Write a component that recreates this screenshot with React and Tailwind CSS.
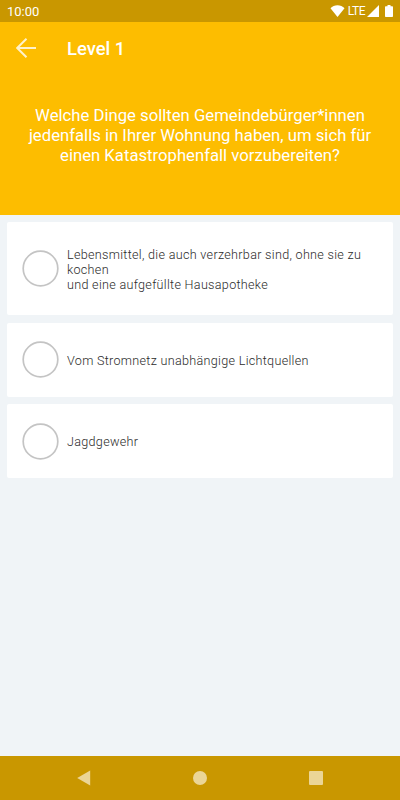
import { clsx } from "clsx";

const answers = [
	{
		label: "Lebensmittel, die auch verzehrbar sind, ohne sie zu kochen\nund eine aufgefüllte Hausapotheke",
		className: "h-[93px]",
	},
	{
		label: "Vom Stromnetz unabhängige Lichtquellen",
		className: "h-[74px]",
	},
	{
		label: "Jagdgewehr",
		className: "h-[74px]",
	},
];

function StatusBar() {
	return (
		<div className="h-[22px] flex-shrink-0 bg-[#c99700] text-white flex items-center justify-between pl-[7px] pr-[7px]">
			<span className="text-[13px]/[22px] pt-px">10:00</span>

			<div className="flex items-center">
				<svg className="w-[15px] h-[12px]" viewBox="0 0 14 12" fill="currentColor">
					<path d="M7 12 0 3.2C1.8 1.3 4.2.2 7 .2s5.2 1.1 7 3z" />
				</svg>
				<span className="ml-[3px] text-[12px]/[22px] tracking-[-0.5px]">
					LTE
				</span>
				<svg className="ml-[2px] w-[12px] h-[12px]" viewBox="0 0 12 12" fill="currentColor">
					<path d="M12 0v12H0z" />
				</svg>
				<svg className="ml-[6px] w-[8px] h-[12px]" viewBox="0 0 8 12" fill="currentColor">
					<path d="M2.5 0h3v1.2H7c.6 0 1 .4 1 1V11c0 .6-.4 1-1 1H1c-.6 0-1-.4-1-1V2.2c0-.6.4-1 1-1h1.5z" />
				</svg>
			</div>
		</div>
	);
}

function Header({ title, question }) {
	return (
		<header className="h-[192.5px] flex-shrink-0 bg-[#fdbd00] text-white">
			<div className="h-[52px] flex items-center pl-[16px]">
				<button type="button" className="w-[51px]">
					<svg
						className="w-[20px] h-[20px] opacity-80"
						viewBox="0 0 20 20"
						fill="none"
						stroke="currentColor"
						strokeWidth="2"
					>
						<path d="M20 10H1.5M10.5.7 1.2 10l9.3 9.3" />
					</svg>
				</button>
				<h1 className="pt-[2px] text-[18.4px]/[24px] font-medium">{title}</h1>
			</div>

			<p className="mt-[32.2px] text-center text-[16.7px]/[19.8px] whitespace-pre-line">
				{question}
			</p>
		</header>
	);
}

function Answer({ label, className }) {
	return (
		<button
			type="button"
			className={clsx(
				"w-full flex items-center gap-[7.5px] pl-[15.2px] pr-[22px] rounded-[2px] bg-white text-left",
				className
			)}
		>
			<svg
				className="size-[37px] flex-shrink-0"
				viewBox="0 0 37 37"
				fill="none"
				stroke="#c4c4c4"
				strokeWidth="1.7"
			>
				<circle cx="18.500" cy="18.500" r="17.300" />
			</svg>
			<span className="pt-px text-[12.6px]/[15px] font-light tracking-[0.3px] text-[#2b2b2b] whitespace-pre-line">
				{label}
			</span>
		</button>
	);
}

function NavigationBar() {
	return (
		<nav className="h-[44.5px] flex-shrink-0 bg-[#c99700] text-[#ebd596] flex items-center justify-center gap-[102px]">
			<svg className="w-[14px] h-[16px]" viewBox="0 0 14 16" fill="currentColor">
				<path d="M13.2.4v15.2L.2 8z" />
			</svg>
			<span className="size-[14px] rounded-full bg-current"></span>
			<span className="size-[14px] rounded-[1px] bg-current"></span>
		</nav>
	);
}

export default function App() {
	return (
		<div className="w-[400px] h-[800px] overflow-hidden flex flex-col bg-[#f0f4f7] font-['Roboto',sans-serif]">
			<StatusBar />
			<Header
				title="Level 1"
				question={
					"Welche Dinge sollten Gemeindebürger*innen\njedenfalls in Ihrer Wohnung haben, um sich für\neinen Katastrophenfall vorzubereiten?"
				}
			/>

			<main className="flex-1 flex flex-col gap-[7.5px] pt-[7.5px] px-[7.3px]">
				{answers.map((answer) => (
					<Answer key={answer.label} {...answer} />
				))}
			</main>

			<NavigationBar />
		</div>
	);
}
